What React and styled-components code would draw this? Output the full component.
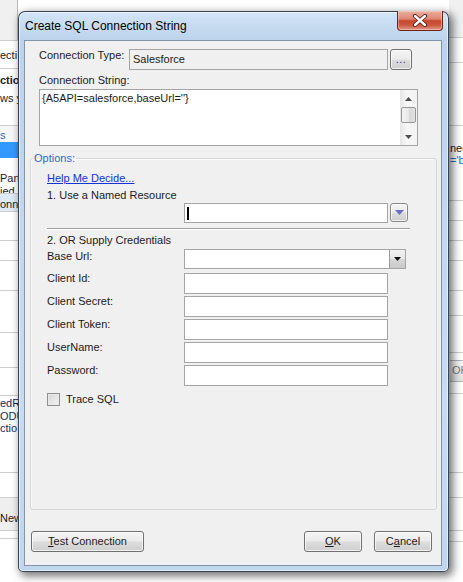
import React from 'react';
import styled, { createGlobalStyle } from 'styled-components';

const GlobalStyle = createGlobalStyle`
  html, body { margin: 0; padding: 0; }
  body {
    font-family: "Liberation Sans", Arial, sans-serif;
    font-size: 11px;
    color: #1b1b1b;
    background: #fff;
  }
`;

// rows of the window that sits behind the dialog (only edges show)
const leftRows = [
  { h: 40, bg: '#f0f0f0', edge: true },
  { h: 28, line: true, pad: 7, lines: [{ t: 'ecti' }] },
  { h: 57, line: true, pad: 2, lh: 18, lines: [{ t: 'ctio', b: true }, { t: 'ws y' }] },
  { h: 17, line: true, bg: '#f7f7f7', pad: 2, lines: [{ t: 's', c: '#2a6bc4' }] },
  { h: 16, bg: '#3399ff' },
  { h: 35, pad: 14, lh: 13, lines: [{ t: 'Part' }, { t: 'ied' }] },
  { h: 18, line: true, bg: '#dfeaf7', pad: 3, lines: [{ t: 'onn' }] },
  { h: 29, line: true },
  { h: 20, line: true },
  { h: 30, line: true },
  { h: 42, line: true },
  { h: 35, line: true },
  { h: 28, line: true },
  { h: 77, line: true, pad: 1, lh: 12.5, lines: [{ t: 'edR', c: '#1c2a55' }, { t: 'ODU', c: '#1c2a55' }, { t: 'ctio', c: '#1c2a55' }] },
  { h: 25, line: true },
  { h: 33, line: true, bg: '#efefef', pad: 13, lines: [{ t: 'New' }] },
  { h: 8, line: true },
  { h: 44, line: true },
];

const rightRows = [
  { h: 37, bg: '#f0f0f0' },
  { h: 25, line: true },
  { h: 63, line: true },
  { h: 75, line: true, pad: 16, lh: 12, lines: [{ t: 'nec' }, { t: "='b", c: '#2a6bc4' }] },
  { h: 20, line: true },
  { h: 20, line: true },
  { h: 20, line: true },
  { h: 30, line: true },
  { h: 25, line: true },
  { h: 37, line: true },
  { h: 41, line: true, button: 'OK' },
  { h: 79, line: true },
  { h: 25, line: true },
  { h: 33, line: true },
  { h: 11, line: true },
  { h: 41, line: true },
];

const fields = ['Client Id:', 'Client Secret:', 'Client Token:', 'UserName:', 'Password:'];

function DownTriangle({ color, w = 9, h = 5 }) {
  return (
    <svg width={w} height={h} viewBox={`0 0 ${w} ${h}`}>
      <path d={`M0 0 L${w} 0 L${w / 2} ${h} Z`} fill={color} />
    </svg>
  );
}

function UpTriangle({ color, w = 7, h = 4 }) {
  return (
    <svg width={w} height={h} viewBox={`0 0 ${w} ${h}`}>
      <path d={`M0 ${h} L${w} ${h} L${w / 2} 0 Z`} fill={color} />
    </svg>
  );
}

function BackStrip({ rows, width, inset }) {
  return (
    <Strip $width={width}>
      {rows.map((r, i) => (
        <BgRow key={i} $h={r.h} $bg={r.bg} $line={r.line} $edge={r.edge} $pad={r.pad || 0} $inset={inset}>
          {(r.lines || []).map((l, j) => (
            <BgText key={j} $lh={r.lh || 14} $color={l.c} $bold={l.b}>{l.t}</BgText>
          ))}
          {r.button && <BgButton>{r.button}</BgButton>}
        </BgRow>
      ))}
    </Strip>
  );
}

export default function App() {
  return (
    <>
      <GlobalStyle />
      <Screen>
        <Backdrop>
          <BackStrip rows={leftRows} width={18} inset={0} />
          <BackStrip rows={rightRows} width={14} inset={1} />
        </Backdrop>

        <Dialog>
          <TitleBar>
            <Title>Create SQL Connection String</Title>
            <CloseButton>
              <svg width="16" height="13" viewBox="0 0 16 13">
                <path d="M3 2 L13 11 M13 2 L3 11" stroke="#5a1a12" strokeWidth="4.2" strokeLinecap="round" />
                <path d="M3 2 L13 11 M13 2 L3 11" stroke="#ffffff" strokeWidth="2.4" strokeLinecap="round" />
              </svg>
            </CloseButton>
          </TitleBar>

          <Client>
            <TopSection>
              <FormRow>
                <FieldLabel $w={90}>Connection Type:</FieldLabel>
                <ReadOnlyBox>Salesforce</ReadOnlyBox>
                <EllipsisButton>...</EllipsisButton>
              </FormRow>
              <StackLabel>Connection String:</StackLabel>
              <MemoBox>
                <MemoText>{"{A5API=salesforce,baseUrl=''}"}</MemoText>
                <ScrollBar>
                  <ScrollArrow><UpTriangle color="#4d4d4d" /></ScrollArrow>
                  <ScrollThumb />
                  <ScrollTrack />
                  <ScrollArrow><DownTriangle color="#4d4d4d" w={7} h={4} /></ScrollArrow>
                </ScrollBar>
              </MemoBox>
            </TopSection>

            <GroupBox>
              <GroupLegend>Options:</GroupLegend>
              <HelpLink>Help Me Decide...</HelpLink>
              <SectionLabel $top={3}>1. Use a Named Resource</SectionLabel>
              <ComboRow>
                <TextBox $w={204} $h={20}><Caret /></TextBox>
                <DropButton><DownTriangle color="#6a6ec4" /></DropButton>
              </ComboRow>
              <Separator />
              <SectionLabel $top={3}>2. OR Supply Credentials</SectionLabel>
              <FieldRow $top={2}>
                <FieldLabel $w={137} $shift={0}>Base Url:</FieldLabel>
                <ComboBox>
                  <ComboArrow><DownTriangle color="#111" w={7} h={4} /></ComboArrow>
                </ComboBox>
              </FieldRow>
              {fields.map((f, i) => (
                <FieldRow key={f} $top={i === 0 ? 4 : 2}>
                  <FieldLabel $w={137} $shift={-2}>{f}</FieldLabel>
                  <TextBox $w={204} $h={21} />
                </FieldRow>
              ))}
              <CheckRow>
                <CheckBox />
                <span>Trace SQL</span>
              </CheckRow>
            </GroupBox>

            <Footer>
              <PushButton $w={113}><u>T</u>est Connection</PushButton>
              <Spacer />
              <PushButton $w={58}><u>O</u>K</PushButton>
              <PushButton $w={58}>C<u>a</u>ncel</PushButton>
            </Footer>
          </Client>
        </Dialog>
      </Screen>
    </>
  );
}

const Screen = styled.div`
  position: relative;
  width: 463px;
  height: 582px;
  overflow: hidden;
  background: #fff;
`;

const Backdrop = styled.div`
  display: flex;
  justify-content: space-between;
  height: 100%;
`;

const Strip = styled.div`
  width: ${p => p.$width}px;
  display: flex;
  flex-direction: column;
  overflow: hidden;
`;

const BgRow = styled.div`
  box-sizing: border-box;
  flex-shrink: 0;
  height: ${p => p.$h}px;
  background: ${p => p.$bg || '#fff'};
  border-top: ${p => (p.$line ? '1px solid #cdcdcd' : 'none')};
  border-right: ${p => (p.$edge ? '1px solid #b9b9b9' : 'none')};
  padding-top: ${p => p.$pad}px;
  padding-left: ${p => p.$inset}px;
  overflow: hidden;
  white-space: nowrap;
`;

const BgText = styled.div`
  line-height: ${p => p.$lh}px;
  color: ${p => p.$color || '#1b1b1b'};
  font-weight: ${p => (p.$bold ? 700 : 400)};
`;

const BgButton = styled.div`
  margin-top: 7px;
  height: 20px;
  line-height: 19px;
  padding-left: 2px;
  color: #7a7a7a;
  border-top: 1px solid #b5b5b5;
  border-bottom: 1px solid #b5b5b5;
  background: linear-gradient(#f6f6f6, #e3e3e3);
`;

const Dialog = styled.div`
  position: absolute;
  left: 18px;
  top: 11px;
  width: 431px;
  height: 561px;
  box-sizing: border-box;
  display: flex;
  flex-direction: column;
  border: 1px solid rgba(38, 52, 72, 0.9);
  border-radius: 7px 7px 5px 5px;
  background: linear-gradient(180deg, #d3e4f6 0%, #bcd3ec 5%, #c2d7ee 35%, #c8dbf0 70%, #c0d6ee 100%);
  box-shadow: inset 0 0 0 1px rgba(255, 255, 255, 0.55), 3px 3px 9px 1px rgba(0, 0, 0, 0.55);
`;

const TitleBar = styled.div`
  height: 28px;
  display: flex;
  align-items: flex-start;
  padding: 0 5px 0 6px;
  flex-shrink: 0;
`;

const Title = styled.div`
  align-self: center;
  font-size: 12px;
  color: #000;
  margin-top: -1px;
`;

const CloseButton = styled.div`
  margin-left: auto;
  margin-top: -1px;
  width: 46px;
  height: 20px;
  box-sizing: border-box;
  display: flex;
  align-items: center;
  justify-content: center;
  border: 1px solid #6b2419;
  border-top: none;
  border-radius: 0 0 4px 4px;
  background: linear-gradient(180deg, #eab0a2 0%, #de8673 42%, #c8472d 52%, #cc5a42 75%, #e39a86 100%);
  box-shadow: inset 0 0 0 1px rgba(255, 220, 210, 0.45);
`;

const Client = styled.div`
  flex: 1;
  margin: 0 6px 5px 5px;
  display: flex;
  flex-direction: column;
  background: #f0f0f0;
  border: 1px solid #8294aa;
`;

const TopSection = styled.div`
  padding: 8px 0 0 14px;
`;

const FormRow = styled.div`
  display: flex;
  align-items: flex-start;
`;

const FieldLabel = styled.div`
  width: ${p => p.$w}px;
  flex-shrink: 0;
  line-height: 14px;
  margin-top: ${p => (p.$shift === undefined ? -1 : p.$shift)}px;
  color: #1b1b1b;
`;

const ReadOnlyBox = styled.div`
  width: 259px;
  height: 21px;
  box-sizing: border-box;
  padding-left: 3px;
  line-height: 19px;
  background: #f0f0f0;
  border: 1px solid #a5a5a5;
  color: #1b1b1b;
`;

const EllipsisButton = styled.div`
  margin-left: 2px;
  width: 22px;
  height: 21px;
  box-sizing: border-box;
  border: 1px solid #707070;
  border-radius: 3px;
  background: linear-gradient(180deg, #f4f4f4 0%, #ebebeb 48%, #dddddd 52%, #cfcfcf 100%);
  box-shadow: inset 0 0 0 1px rgba(255, 255, 255, 0.7);
  color: #3b2f7a;
  text-align: center;
  line-height: 18px;
  letter-spacing: 0.5px;
`;

const StackLabel = styled.div`
  margin-top: 3px;
  line-height: 14px;
`;

const MemoBox = styled.div`
  margin-top: 2px;
  width: 379px;
  height: 57px;
  box-sizing: border-box;
  display: flex;
  background: #fff;
  border: 1px solid #a5a5a5;
`;

const MemoText = styled.div`
  flex: 1;
  padding: 1px 0 0 2px;
  line-height: 14px;
  color: #1b1b1b;
`;

const ScrollBar = styled.div`
  width: 17px;
  display: flex;
  flex-direction: column;
  align-items: center;
  background: linear-gradient(90deg, #e6e6e6, #f6f6f6 40%, #f3f3f3);
`;

const ScrollArrow = styled.div`
  height: 17px;
  width: 17px;
  flex-shrink: 0;
  display: flex;
  align-items: center;
  justify-content: center;
`;

const ScrollThumb = styled.div`
  width: 15px;
  height: 16px;
  box-sizing: border-box;
  flex-shrink: 0;
  border: 1px solid #979797;
  border-radius: 2px;
  background: linear-gradient(90deg, #f4f4f4 0%, #e8e8e8 50%, #d8d8d8 51%, #e2e2e2 100%);
`;

const ScrollTrack = styled.div`
  flex: 1;
`;

const GroupBox = styled.fieldset`
  flex: 1;
  min-width: 0;
  margin: 5px 4px 0 5px;
  padding: 6px 0 0 16px;
  border: 1px solid #d6d6d6;
  border-radius: 3px;
  box-shadow: inset 1px 1px 0 #fbfbfb;
`;

const GroupLegend = styled.legend`
  margin-left: -14px;
  padding: 0 1px;
  line-height: 14px;
  color: #2f68c8;
`;

const HelpLink = styled.a`
  display: block;
  width: fit-content;
  line-height: 14px;
  color: #1034d8;
  text-decoration: underline;
  cursor: pointer;
`;

const SectionLabel = styled.div`
  margin-top: ${p => p.$top}px;
  line-height: 14px;
`;

const ComboRow = styled.div`
  display: flex;
  margin: 1px 0 0 137px;
`;

const TextBox = styled.div`
  width: ${p => p.$w}px;
  height: ${p => p.$h}px;
  box-sizing: border-box;
  display: flex;
  align-items: center;
  background: #fff;
  border: 1px solid #a5a5a5;
`;

const Caret = styled.span`
  margin-left: 2px;
  width: 2px;
  height: 13px;
  background: #000;
`;

const DropButton = styled.div`
  margin-left: 2px;
  width: 18px;
  height: 19px;
  box-sizing: border-box;
  display: flex;
  align-items: center;
  justify-content: center;
  border: 1px solid #8a8a8a;
  border-radius: 3px;
  background: linear-gradient(180deg, #f4f4f4 0%, #ebebeb 48%, #dddddd 52%, #cdcdcd 100%);
  box-shadow: inset 0 0 0 1px rgba(255, 255, 255, 0.7);
`;

const Separator = styled.div`
  margin-top: 5px;
  width: 363px;
  border-top: 1px solid #a0a0a0;
  border-bottom: 1px solid #ffffff;
`;

const FieldRow = styled.div`
  display: flex;
  align-items: flex-start;
  margin-top: ${p => p.$top}px;
`;

const ComboBox = styled.div`
  width: 222px;
  height: 20px;
  box-sizing: border-box;
  display: flex;
  justify-content: flex-end;
  background: #fff;
  border: 1px solid #a5a5a5;
`;

const ComboArrow = styled.div`
  width: 16px;
  height: 100%;
  box-sizing: border-box;
  display: flex;
  align-items: center;
  justify-content: center;
  border-left: 1px solid #9a9a9a;
  background: linear-gradient(180deg, #f2f2f2 0%, #e6e6e6 48%, #d6d6d6 52%, #c9c9c9 100%);
`;

const CheckRow = styled.div`
  display: flex;
  align-items: center;
  gap: 6px;
  margin-top: 6px;
  line-height: 14px;
`;

const CheckBox = styled.div`
  width: 13px;
  height: 13px;
  box-sizing: border-box;
  border: 1px solid #8f8f8f;
  background: linear-gradient(135deg, #d6d6d6, #f4f4f4);
  box-shadow: inset 0 0 0 1px #e9e9e9;
`;

const Footer = styled.div`
  display: flex;
  gap: 12px;
  padding: 21px 9px 13px 6px;
`;

const Spacer = styled.div`
  flex: 1;
`;

const PushButton = styled.div`
  width: ${p => p.$w}px;
  height: 21px;
  box-sizing: border-box;
  border: 1px solid #707070;
  border-radius: 3px;
  background: linear-gradient(180deg, #f4f4f4 0%, #ebebeb 48%, #dddddd 52%, #cfcfcf 100%);
  box-shadow: inset 0 0 0 1px rgba(255, 255, 255, 0.7);
  text-align: center;
  line-height: 19px;
  color: #1b1b1b;

  u {
    text-decoration: underline;
  }
`;
